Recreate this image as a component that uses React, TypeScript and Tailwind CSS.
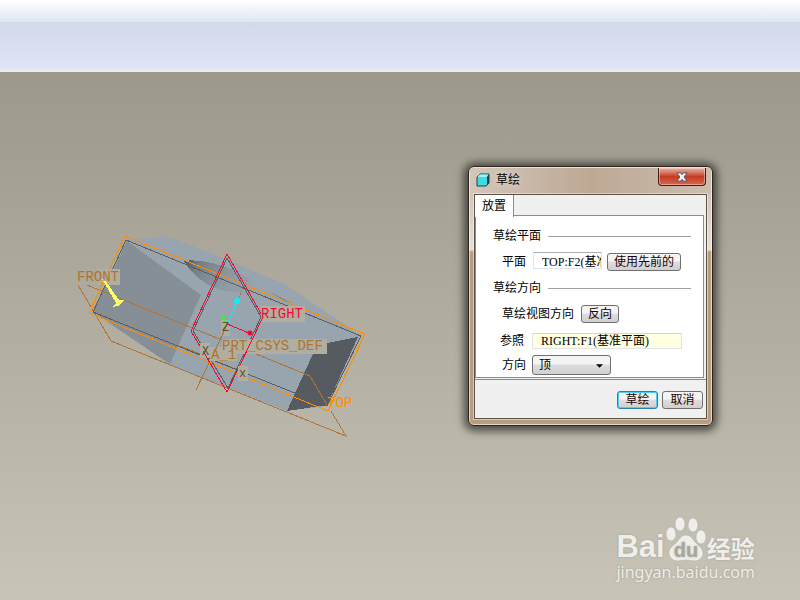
import React, { useState } from "react";

const Tag = ({
  x,
  y,
  width,
  height,
}: {
  x: number;
  y: number;
  width: number;
  height: number;
}) => <rect x={x} y={y} width={width} height={height} fill="#b2ae9f" />;

const ModelView = () => {
  return (
    <svg
      className="absolute left-[70px] top-[148px] w-[300px] h-[220px]"
      viewBox="70 220 300 220"
      shapeRendering="crispEdges"
      fill="none"
    >
      <defs>
        <linearGradient id="bore" x1="0" y1="0" x2="1" y2="0.35">
          <stop offset="0" stopColor="#4e5558" />
          <stop offset="0.15" stopColor="#747f86" />
          <stop offset="0.45" stopColor="#8b969f" />
          <stop offset="0.8" stopColor="#98a4ae" />
        </linearGradient>
      </defs>
      {/* solid body */}
      <path
        d="M126 240 L167 236 L210 253 L283 283 L350 328 L360 336 L327 406 L287 411 L170 365 L93 312 Z"
        fill="#98a4ae"
      />
      <path d="M127 241 L201 295 L170 364 L93 312 Z" fill="#858f95" />
      <path
        d="M184 261 C196 259 212 262 232 269 L292 303 L283 304 L235 292 C212 291 194 278 184 261 Z"
        fill="url(#bore)"
      />
      <path d="M270 292 L292 303 L284 301 Z" fill="#7d888f" />
      <path d="M358 337 L327 405 L287 411 L317 345 Z" fill="#555b61" />

      {/* FRONT plane */}
      <path
        d="M78 285 L111 341 L346 436 L331 411 M327 405 L310 376 L87 285"
        stroke="#ad7433"
      />
      <path d="M196 390 L227 325 M180 346 L203 355 M218 362 L241 371" stroke="#ad7433" />
      <path d="M238 300 L247 279" stroke="#957958" strokeDasharray="1 2" />

      {/* TOP plane */}
      <path d="M126 240 L361 336 L327 406 L93 312 Z" stroke="#5d5d5b" />
      <path d="M125 236 L365 334 L328 411 L89 313 Z" stroke="#ff8c00" />

      {/* RIGHT plane */}
      <path d="M227 258 L261 317 L228 388 L193 331 Z" stroke="#5d5d5b" />
      <path d="M227 254 L263 317 L227 392 L191 331 Z" stroke="#fa0636" />

      <Tag x={98} y={269} width={22} height={16} />
      <Tag x={261} y={306} width={44} height={16} />
      <Tag x={222} y={339} width={105} height={15} />
      <Tag x={210} y={347} width={27} height={14} />
      <Tag x={200} y={343} width={10} height={15} />
      <Tag x={221} y={320} width={9} height={16} />
      <Tag x={238} y={366} width={10} height={15} />
      <path d="M263 317 L240 365 M203 351 L212 366" stroke="#fa0636" />
      <path d="M227 325 L213 355" stroke="#ad7433" />
      <path d="M104 280 L93 305" stroke="#ff8c00" />

      {/* coordinate system */}
      <path d="M227 325 L237 302" stroke="#00f4f4" />
      <path d="M227 325 L223 318" stroke="#35f535" />
      <path d="M227 324 L249 333" stroke="#fa0636" />
      <g shapeRendering="auto">
        <circle cx="237" cy="301" r="3" fill="#00f4f4" />
        <circle cx="223" cy="317" r="2" fill="#35f535" />
        <circle cx="250" cy="333" r="2.5" fill="#fa0636" />
      </g>

      {/* view direction arrow */}
      <path
        d="M102 279 L105 280 L119 300 L124 300 L118 306 L112 307 L116 303 Z"
        fill="#ffff62"
      />

      <g fontFamily="'Liberation Mono', monospace" fontSize="14">
        <text x="77" y="281" fill="#ad7433">FRONT</text>
        <text x="261" y="318" fill="#fa0636">RIGHT</text>
        <text x="222" y="350" fill="#ad7433">PRT_CSYS_DEF</text>
        <text x="211" y="359" fill="#ad7433">A_1</text>
        <text x="327" y="407" fill="#ff8c00">TOP</text>
      </g>
      <g fontFamily="'Liberation Mono', monospace" fontSize="12" fill="#5d4b38">
        <text x="202" y="355">X</text>
        <text x="222" y="331">Z</text>
        <text x="239" y="377">x</text>
      </g>
    </svg>
  );
};

const buttonClass =
  "h-[18px] shrink-0 rounded-[3px] border bg-linear-to-b from-[#f4f4f4] from-45% via-[#dddddd] via-50% to-[#d0d0d0] text-[12px] leading-[16px] text-[#200000] whitespace-nowrap";

const GroupTitle = ({ children }: { children: React.ReactNode }) => (
  <div className="flex h-[26px] items-center gap-[7px] pl-[17px] pr-[12px]">
    <h2 className="shrink-0">{children}</h2>
    <div className="h-px flex-1 bg-[#a0a0a0]" />
  </div>
);

const SketchDialog = () => {
  const [plane, setPlane] = useState<string>("TOP:F2(基准平面)");
  const [reference, setReference] = useState<string>("RIGHT:F1(基准平面)");
  const [direction, setDirection] = useState<string>("顶");

  return (
    <section
      aria-label="草绘"
      className="absolute left-[468px] top-[94px] w-[245px] rounded-[6px] border border-[#2d251d] bg-linear-to-b from-[#c8b9a9] via-[#e6dfd8] via-32% to-[#b89d80] to-33% px-[5px] pb-[6px] text-[12px] leading-[16px] text-black shadow-[0_1px_9px_4px_rgba(0,0,0,0.6),inset_0_0_0_1px_rgba(255,255,255,0.6)] font-['Liberation_Serif','Noto_Sans_CJK_SC',serif]"
    >
      <header className="-mx-1 mt-px flex h-[26px] items-start rounded-t-[5px] bg-linear-to-r from-[#d3c7bb] via-[#bda893] via-50% to-[#cbbdaf] pl-[6px] pr-[5px]">
        <svg className="mt-[5px] size-[14px]" viewBox="0 0 14 14">
          <path d="M1 4 L4 1 H13 V10 L10 13 H1 Z" fill="#3edbe2" stroke="#243c3e" />
          <path d="M1.500 4 L3.500 1.500 H12.500 L10.500 4 Z" fill="#a9f1f1" />
          <path d="M11 3.500 L13 1.500 V10.500 L11 12.500 Z" fill="#20464a" />
        </svg>
        <h1 className="ml-[6px] mt-[4px] flex-1 [text-shadow:0_0_6px_rgba(255,255,255,0.8)]">
          草绘
        </h1>
        <button
          type="button"
          aria-label="关闭"
          className="flex h-[18px] w-[48px] items-center justify-center rounded-b-[4px] border border-t-0 border-[#4c1812] bg-linear-to-b from-[#e39d8c] from-10% via-[#c23c22] via-50% to-[#d9654a] shadow-[inset_0_0_0_1px_rgba(255,255,255,0.4)]"
        >
          <svg className="h-[10px] w-[12px]" viewBox="0 0 13 11">
            <path
              d="M1 1 H5 L6.500 3 L8 1 H12 L8.800 5.500 L12 10 H8 L6.500 8 L5 10 H1 L4.200 5.500 Z"
              fill="#f5f5f5"
              stroke="#4e5466"
            />
          </svg>
        </button>
      </header>

      <div className="border border-[#5c5145] bg-[#f0f0f0] shadow-[0_0_0_1px_rgba(255,255,255,0.45)]">
        <div role="tablist" className="flex h-[21px]">
          <button
            type="button"
            role="tab"
            aria-selected="true"
            className="-mb-px h-[22px] border-r border-[#8b8b98] bg-white px-[7px] leading-[20px]"
          >
            放置
          </button>
          <div className="mr-[2px] flex-1 border-b border-[#8b8b98]" />
        </div>
        <div
          role="tabpanel"
          className="mr-[2px] border-b border-l border-r border-[#8b8b98] bg-white pt-[7px]"
        >
          <GroupTitle>草绘平面</GroupTitle>
          <div className="flex h-[26px] items-center">
            <label htmlFor="plane" className="w-[50px] text-right">
              平面
            </label>
            <input
              id="plane"
              value={plane}
              onChange={(e) => setPlane(e.target.value)}
              className="-mt-[3px] ml-[7px] h-[17px] w-[69px] border border-[#e2e3ea] border-t-[#abadb3] bg-white pl-[8px]"
            />
            <button
              type="button"
              className={`${buttonClass} ml-[5px] border-[#707070] px-[6px]`}
            >
              使用先前的
            </button>
          </div>
          <GroupTitle>草绘方向</GroupTitle>
          <div className="flex h-[26px] items-center gap-[7px] pl-[26px]">
            <span>草绘视图方向</span>
            <button
              type="button"
              className={`${buttonClass} border-[#707070] px-[6px]`}
            >
              反向
            </button>
          </div>
          <div className="flex h-[28px] items-center">
            <label htmlFor="reference" className="w-[48px] text-right">
              参照
            </label>
            <input
              id="reference"
              value={reference}
              onChange={(e) => setReference(e.target.value)}
              className="ml-[8px] h-[16px] w-[150px] border border-[#e2e3ea] border-t-[#d5d5cf] bg-[#ffffe1] pl-[8px]"
            />
          </div>
          <div className="flex h-[22px] items-start">
            <label htmlFor="direction" className="w-[50px] pt-[2px] text-right">
              方向
            </label>
            <div className="relative ml-[6px]">
              <select
                id="direction"
                value={direction}
                onChange={(e) => setDirection(e.target.value)}
                className="block h-[20px] w-[79px] appearance-none rounded-[3px] border border-[#707070] bg-linear-to-b from-[#f4f4f4] from-45% via-[#dddddd] via-50% to-[#d0d0d0] pl-[6px] leading-[18px]"
              >
                <option>顶</option>
                <option>底部</option>
                <option>左</option>
                <option>右</option>
              </select>
              <svg
                className="pointer-events-none absolute right-[8px] top-[9px] h-[4px] w-[7px]"
                viewBox="0 0 8 4"
              >
                <path d="M0 0 H8 L4 4 Z" fill="black" />
              </svg>
            </div>
          </div>
        </div>
        <footer className="mt-px flex justify-end gap-[4px] border-t border-[#8b8b98] pb-[9px] pr-[3px] pt-[11px]">
          <button
            type="button"
            className={`${buttonClass} w-[41px] border-[#2c7fa8] shadow-[inset_0_0_0_1px_#48d0f8]`}
          >
            草绘
          </button>
          <button
            type="button"
            className={`${buttonClass} w-[41px] border-[#707070]`}
          >
            取消
          </button>
        </footer>
      </div>
    </section>
  );
};

const Watermark = () => {
  return (
    <div className="absolute bottom-[18px] right-[45px] text-[#efeeea] [text-shadow:0_0_2px_rgba(110,108,98,0.5)]">
      <div className="flex h-[46px] items-end">
        <span className="font-['Liberation_Sans',sans-serif] text-[31px] font-bold leading-[30px]">
          Bai
        </span>
        <svg className="h-[46px] w-[42px]" viewBox="0 0 42 46">
          <g fill="#efeeea" stroke="#aaa798" strokeWidth="0.500">
            <ellipse cx="6" cy="18" rx="5" ry="7" />
            <ellipse cx="15" cy="8" rx="5" ry="7" />
            <ellipse cx="28" cy="9" rx="5" ry="7" />
            <ellipse cx="36" cy="21" rx="5" ry="7" />
            <path d="M21 19 C26 19 28 24 32 28 C38 33 40 38 36 42 C32 47 26 44 21 44 C16 44 10 47 6 42 C2 37 4 32 10 28 C14 24 16 19 21 19 Z" />
          </g>
          <text
            x="21"
            y="41"
            textAnchor="middle"
            fontFamily="'Liberation Sans', sans-serif"
            fontSize="20"
            fontWeight="bold"
            fill="#aaa798"
          >
            du
          </text>
        </svg>
        <span className="font-['Noto_Sans_CJK_SC',sans-serif] text-[24px] font-bold leading-[28px]">
          经验
        </span>
      </div>
      <a
        href="#jingyan"
        className="block font-['Noto_Sans',sans-serif] text-[16px] leading-[20px]"
      >
        jingyan.baidu.com
      </a>
    </div>
  );
};

export default function App() {
  return (
    <div className="flex min-h-screen flex-col overflow-hidden">
      <div className="h-[22px] bg-linear-to-b from-white to-[#dde7f2]" />
      <div className="h-[47px] bg-linear-to-b from-[#d0d9ea] via-[#d7dcee] via-30% to-[#dfe6f7]" />
      <div className="h-[3px] bg-[#ebebe8]" />
      <main className="relative flex-1 bg-linear-to-b from-[#9c998c] to-[#c8c5b8]">
        <ModelView />
        <SketchDialog />
        <Watermark />
      </main>
    </div>
  );
}
